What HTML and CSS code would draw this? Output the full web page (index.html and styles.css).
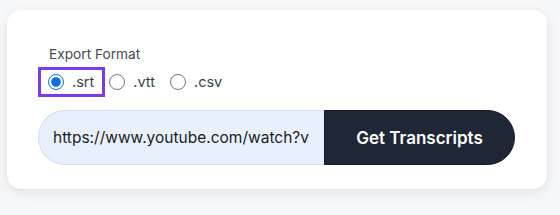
FILE: index.html
```html
<!DOCTYPE html>
<html>
<head>
<meta charset="utf-8">
<link rel="stylesheet" href="styles.css">
</head>
<body>
<div class="card">
  <div class="field-label">Export Format</div>
  <div class="radios">
    <label class="opt focused"><input type="radio" name="fmt" checked><span>.srt</span></label>
    <label class="opt"><input type="radio" name="fmt"><span>.vtt</span></label>
    <label class="opt"><input type="radio" name="fmt"><span>.csv</span></label>
  </div>
  <div class="bar">
    <input class="url" type="text" value="https://www.youtube.com/watch?v">
    <button class="go">Get Transcripts</button>
  </div>
</div>
</body>
</html>
```

FILE: styles.css
```css
html, body {
  margin: 0;
  padding: 0;
}
body {
  background: #f6f7f9;
  font-family: Inter, "Noto Sans", sans-serif;
  width: 560px;
  height: 215px;
  overflow: hidden;
}
.card {
  margin: 10px 0 0 7px;
  width: 540px;
  height: 179px;
  box-sizing: border-box;
  background: #ffffff;
  border-radius: 14px;
  box-shadow: 0 4px 14px rgba(20, 30, 50, 0.08), 0 1px 3px rgba(20, 30, 50, 0.05);
  padding: 36px 32px 0 31px;
}
.field-label {
  margin-left: 11px;
  font-size: 13.7px;
  line-height: 17px;
  color: #434955;
}
.radios {
  display: flex;
  margin: 7px 0 0 3px;
}
.opt {
  display: inline-flex;
  align-items: center;
  gap: 8px;
  height: 24px;
  box-sizing: border-box;
  padding: 0 8px 0 7px;
  font-size: 14.5px;
  line-height: 16px;
  color: #3a3f4a;
}
.opt input {
  margin: 0;
  width: 16px;
  height: 16px;
  accent-color: #0b6fe0;
}
.opt.focused {
  outline: 3px solid #7c3aed;
}
.bar {
  display: flex;
  margin-top: 16px;
  height: 55px;
}
.url {
  flex: 1;
  min-width: 0;
  box-sizing: border-box;
  height: 55px;
  border: 1px solid #d3dbe7;
  border-right: none;
  border-radius: 28px 0 0 28px;
  background: #e8f0fe;
  padding: 0 0 0 14px;
  font-family: Inter, "Noto Sans", sans-serif;
  font-size: 15.5px;
  color: #1a1d24;
  outline: none;
}
.go {
  width: 191px;
  height: 55px;
  box-sizing: border-box;
  border: 1px solid #141a26;
  border-radius: 0 28px 28px 0;
  background: #1f2737;
  color: #ffffff;
  font-family: Inter, "Noto Sans", sans-serif;
  font-size: 17px;
  font-weight: 600;
  padding: 0;
}
```
